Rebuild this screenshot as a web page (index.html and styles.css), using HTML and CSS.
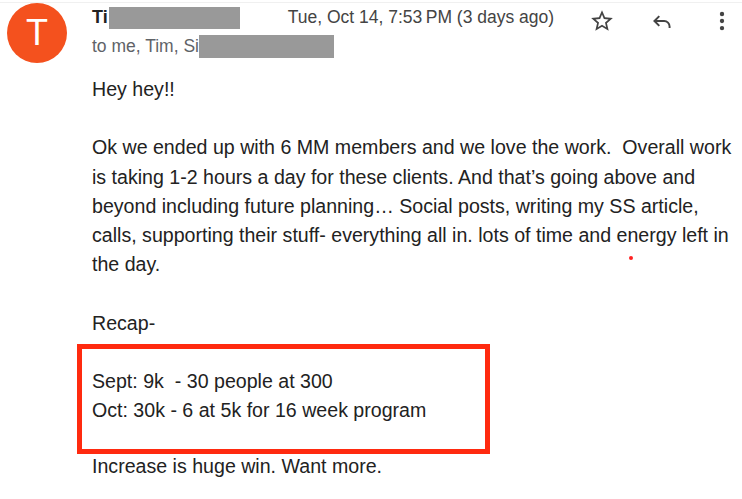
FILE: index.html
```html
<!DOCTYPE html>
<html>
<head>
<meta charset="utf-8">
<link rel="stylesheet" href="styles.css">
</head>
<body>
<div class="mail">
  <div class="avatar">T</div>
  <div class="content">
    <div class="head">
      <div class="from">
        <div class="row1">
          <span class="name">Ti</span><span class="redact r1"></span>
          <span class="date">Tue, Oct 14, 7:53&#8201;PM (3 days ago)</span>
        </div>
        <div class="row2">
          <span class="to">to me, Tim, Si</span><span class="redact r2"></span>
        </div>
      </div>
      <div class="icons">
        <svg class="ic star" width="26" height="26" viewBox="0 0 24 24"><path d="M22 9.24l-7.19-.62L12 2 9.19 8.63 2 9.24l5.46 4.73L5.82 21 12 17.27 18.18 21l-1.63-7.030L22 9.24zM12 15.4l-3.76 2.27 1-4.28-3.32-2.88 4.38-.38L12 6.1l1.71 4.04 4.38.38-3.32 2.88 1 4.28L12 15.4z" fill="#444"/></svg>
        <svg class="ic reply" width="26" height="26" viewBox="0 0 24 24"><path d="M9.5 7.5 5 12l4.5 4.5M5.6 12H14a5 5 0 0 1 5 5v1.5" fill="none" stroke="#444" stroke-width="1.8"/></svg>
        <svg class="ic more" width="26" height="26" viewBox="0 0 24 24"><circle cx="12" cy="5.5" r="2" fill="#444"/><circle cx="12" cy="12" r="2" fill="#444"/><circle cx="12" cy="18.5" r="2" fill="#444"/></svg>
      </div>
    </div>
    <div class="body">
      <p class="para">Hey hey!!</p>
      <p class="para">Ok we ended up with 6 MM members and we love the work.&nbsp; Overall work is taking 1-2 hours a day for these clients. And that’s going above and beyond including future planning… Social posts, writing my SS article, calls, supporting their stuff- everything all in. lots of time and energy left in the day.</p>
      <p class="para recap-label">Recap-</p>
      <div class="recap">
        <div>Sept: 9k &nbsp;- 30 people at 300</div>
        <div>Oct: 30k - 6 at 5k for 16 week program</div>
      </div>
      <p class="last">Increase is huge win. Want more.</p>
    </div>
  </div>
  <span class="dot"></span>
</div>
</body>
</html>
```
FILE: styles.css
```css
html, body { margin: 0; padding: 0; background: #fff; }
body { font-family: "Liberation Sans", Arial, sans-serif; color: #222; overflow: hidden; }
.mail { position: relative; display: flex; border-top: 1px solid #f0f0f0; margin-top: 2px; height: 496px; }
.avatar { flex: none; width: 60px; height: 60px; border-radius: 50%; background: #f4511e; color: #fff; margin-left: 7px; font-size: 36px; line-height: 60px; text-align: center; font-family: "Liberation Sans", sans-serif; }
.content { flex: 1; margin-left: 25px; min-width: 0; }
.head { display: flex; justify-content: space-between; }
.from { display: flex; flex-direction: column; }
.row1 { display: flex; align-items: center; height: 28px; }
.name { font-weight: bold; font-size: 18px; color: #222; }
.redact { display: inline-block; background: #999; }
.r1 { width: 131px; height: 22px; margin-left: 1px; margin-top: 1px; }
.date { margin-left: 48px; font-size: 17.5px; color: #444; }
.row2 { display: flex; align-items: center; height: 26px; margin-top: 2px; }
.to { font-size: 17.5px; color: #5f6368; }
.r2 { width: 135px; height: 23px; }
.icons { display: flex; gap: 34px; margin-right: 7px; margin-top: 5px; }
.ic { display: block; }
.body { margin-top: 16px; font-size: 19.6px; line-height: 29.2px; }
.para { margin: 0 0 29.2px 0; }
.recap-label { margin-bottom: 6px; }
.recap { border: 5px solid #ff2a0f; margin-left: -15px; width: 383px; padding: 18px 10px 24px 10px; }
.last { margin: -2px 0 0 0; }
.dot { position: absolute; left: 629px; top: 253px; width: 4px; height: 4px; border-radius: 50%; background: #f22; }
```
